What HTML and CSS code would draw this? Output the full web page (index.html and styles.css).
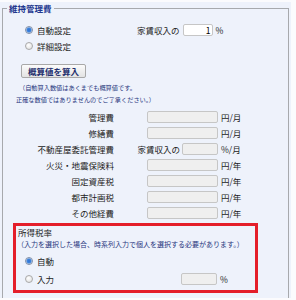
FILE: index.html
```html
<!DOCTYPE html>
<html lang="ja">
<head>
    <meta charset="UTF-8">
    <meta name="viewport" content="width=device-width, initial-scale=1.0">
    <title>維持管理費</title>
    <link rel="stylesheet" href="styles.css">
</head>
<body>
    <div class="panel">
        <fieldset class="box">
            <legend>維持管理費</legend>

            <!-- 設定方法 -->
            <div class="mode">
                <div class="radios">
                    <label class="radio"><input type="radio" name="mode" checked> 自動設定</label>
                    <label class="radio"><input type="radio" name="mode"> 詳細設定</label>
                </div>
                <div class="rate">
                    家賃収入の<input class="num rate-input" type="text" value="1"><span class="unit">%</span>
                </div>
            </div>

            <button class="calc">概算値を算入</button>

            <div class="note">
                <div class="note1">（自動算入数値はあくまでも概算値です。</div>
                <div class="note2">正確な数値ではありませんのでご了承ください。）</div>
            </div>

            <!-- 経費一覧 -->
            <div class="costs">
                <div class="label">管理費</div>
                <div class="field"><input class="num off" type="text" disabled></div>
                <div class="unit">円/月</div>

                <div class="label">修繕費</div>
                <div class="field"><input class="num off" type="text" disabled></div>
                <div class="unit">円/月</div>

                <div class="label">不動産屋委託管理費</div>
                <div class="field">家賃収入の<input class="num off small" type="text" disabled></div>
                <div class="unit">%/月</div>

                <div class="label">火災・地震保険料</div>
                <div class="field"><input class="num off" type="text" disabled></div>
                <div class="unit">円/年</div>

                <div class="label">固定資産税</div>
                <div class="field"><input class="num off" type="text" disabled></div>
                <div class="unit">円/年</div>

                <div class="label">都市計画税</div>
                <div class="field"><input class="num off" type="text" disabled></div>
                <div class="unit">円/年</div>

                <div class="label">その他経費</div>
                <div class="field"><input class="num off" type="text" disabled></div>
                <div class="unit">円/年</div>
            </div>

            <!-- 所得税率 -->
            <div class="tax">
                <div class="tax-title">所得税率</div>
                <div class="tax-note">（入力を選択した場合、時系列入力で個人を選択する必要があります。）</div>
                <label class="radio"><input type="radio" name="tax" checked> 自動</label>
                <div class="tax-row">
                    <label class="radio"><input type="radio" name="tax"> 入力</label>
                    <span class="tax-field"><input class="num off small" type="text" disabled><span class="unit">%</span></span>
                </div>
            </div>
        </fieldset>
    </div>
</body>
</html>
```

FILE: styles.css
```css
/* GLOBAL */
body {
    margin: 0;
    background-color: #fbfbfd;
    font-family: "Noto Sans CJK JP", "Noto Sans", sans-serif;
    font-size: 8.5px;
    color: #222;
}

.panel {
    margin-top: 4px;
    width: 291px;
    height: 296px;
    background-color: #eef2fb;
}

.box {
    margin: -2px 0 0 2px;
    padding: 8px 0 3px 0;
    width: 287px;
    border: 1px solid #a7a9ad;
    box-sizing: border-box;
    height: 297px;
}

legend {
    margin-left: 4px;
    padding: 0 2px;
    line-height: 12px;
    font-weight: bold;
    color: #23378f;
}

/* RADIOS */
.radio {
    display: flex;
    align-items: center;
    height: 16px;
}

.radio input {
    appearance: none;
    -webkit-appearance: none;
    margin: 0 4px 0 0;
    width: 8px;
    height: 8px;
    border-radius: 50%;
    border: 1px solid #a9a9a9;
    background: radial-gradient(circle at 40% 35%, #ffffff, #dcdcdc);
    box-sizing: border-box;
}

.radio input:checked {
    border-color: #7f8ea8;
    background: radial-gradient(circle at 50% 50%, #2e6fd0 0, #3e86e0 2px, #c8d8ee 3px, #f4f6fa 4px);
}

.mode {
    display: flex;
}

.radios {
    margin-left: 22px;
    width: 112px;
}

.rate {
    display: flex;
    align-items: center;
    height: 16px;
}

.num {
    height: 12px;
    padding: 0 1px;
    border: 1px solid #c6c6c6;
    border-radius: 2px;
    box-sizing: border-box;
    font-family: inherit;
    font-size: 8.5px;
    text-align: right;
    background-color: #fff;
}

.rate-input {
    margin-left: 3px;
    width: 30px;
}

.off {
    width: 71px;
    background-color: #efefef;
}

.small {
    margin-left: 2px;
    width: 36px;
}

.unit {
    margin-left: 3px;
}

/* BUTTON */
.calc {
    display: block;
    margin: 10px 0 0 18px;
    width: 65px;
    height: 14px;
    padding: 0;
    border: 1px solid #a8a8a8;
    border-radius: 2px;
    background: linear-gradient(#fbfbfb, #e3e3e3);
    font-family: inherit;
    font-size: 8.5px;
    font-weight: bold;
    color: #1f2f6e;
    line-height: 12px;
}

.note {
    margin-top: 4px;
    font-size: 6.2px;
    line-height: 12px;
    color: #28367e;
}

.note1 {
    margin-left: 16px;
}

.note2 {
    margin-left: 13px;
}

/* COSTS */
.costs {
    display: grid;
    grid-template-columns: 111px 104px auto;
    grid-auto-rows: 16px;
    margin-top: 3px;
    align-items: center;
}

.costs .label {
    text-align: right;
}

.costs .field {
    display: flex;
    justify-content: flex-end;
    align-items: center;
}

/* TAX */
.tax {
    margin: 2px 0 0 10px;
    width: 245px;
    height: 70px;
    padding: 0 0 0 2px;
    border: 3px solid #e41e2a;
    box-sizing: border-box;
}

.tax-title {
    line-height: 12px;
    margin-top: 0;
}

.tax-note {
    font-size: 7px;
    line-height: 12px;
    margin-left: -1px;
    color: #28367e;
    white-space: nowrap;
}

.tax .radio {
    margin-left: 7px;
}

.tax-title + .tax-note + .radio {
    margin-top: 3px;
}

.tax-row {
    display: flex;
    align-items: center;
    margin-top: 2px;
}

.tax-field {
    display: flex;
    align-items: center;
    margin-left: 125px;
}
```
